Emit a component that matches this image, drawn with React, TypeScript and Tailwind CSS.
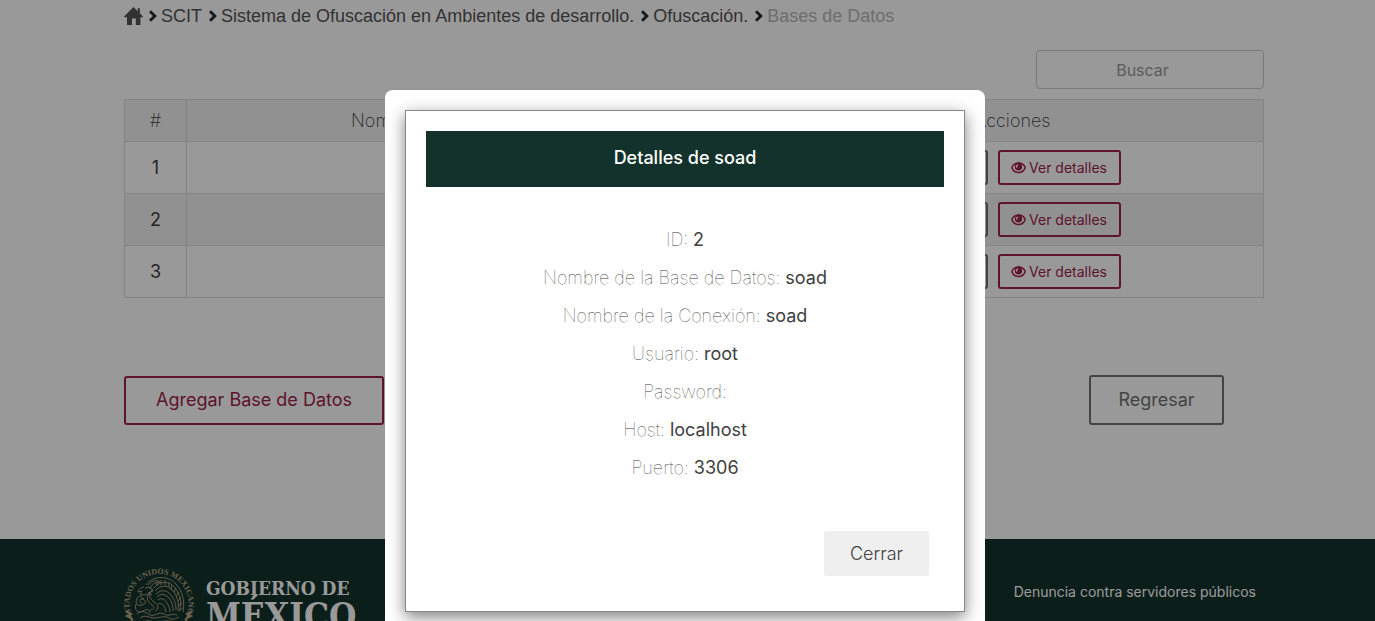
import React from "react";

const details = [
  { label: "ID:", value: "2" },
  { label: "Nombre de la Base de Datos:", value: "soad" },
  { label: "Nombre de la Conexión:", value: "soad" },
  { label: "Usuario:", value: "root" },
  { label: "Password:", value: "" },
  { label: "Host:", value: "localhost" },
  { label: "Puerto:", value: "3306" },
];

function HomeIcon() {
  return (
    <svg viewBox="0 0 19 18" className="h-[18px] w-[19px] shrink-0" fill="currentColor" aria-hidden="true">
      <path d="M9.5 0 13.8 4.2V1.2h2.1v5.1L19 9.5v.8h-2.6V18h-4.6v-6.6H8V18H3V10.3H0v-.8Z" />
    </svg>
  );
}

function ChevronIcon() {
  return (
    <svg viewBox="0 0 8 12" className="h-3 w-2 shrink-0 text-[#2a2a33]" fill="currentColor" aria-hidden="true">
      <path d="M2 .3 7.9 6 2 11.7 0 9.8 3.8 6 0 2.2Z" />
    </svg>
  );
}

function EyeIcon() {
  return (
    <svg viewBox="0 0 15 12" className="h-3 w-[15px] shrink-0" aria-hidden="true">
      <path
        d="M7.5 1C4.400 1 1.800 3 .8 5.600 1.800 8.700 4.400 10.600 7.500 10.600S13.200 8.700 14.200 5.600C13.200 3 10.600 1 7.500 1Z"
        fill="none"
        stroke="currentColor"
        strokeWidth="1.500"
      />
      <path
        d="M7.500.5C5 .5 3.800 2.600 3.800 4.800a3.700 3.700 0 0 0 7.400 0C11.200 2.600 10 .5 7.500.5ZM6.600 2.600c.7 0 .8.700.4 1-.6.4-.8.9-.8 1.600 0 .8-1.100.8-1.200 0-.1-1.400.500-2.500 1.600-2.600Z"
        fill="currentColor"
        fillRule="evenodd"
      />
    </svg>
  );
}

function SealIcon() {
  return (
    <svg viewBox="0 0 70 70" className="size-[70px] shrink-0 text-[#b5a582]" fill="none" stroke="currentColor" aria-hidden="true">
      <defs>
        <path id="seal-arc" d="M6.500 43A29.500 29.500 0 1 1 63.500 43" />
      </defs>
      <text fill="currentColor" stroke="none" className="font-['Liberation_Serif',serif] text-[8px] font-bold">
        <textPath href="#seal-arc" startOffset="50%" textAnchor="middle">
          ESTADOS UNIDOS MEXICANOS
        </textPath>
      </text>
      <g strokeWidth="0.900">
        <path d="M22 17C28 8 43 7 51 15c8 8 10 18 8 29" />
        <path d="M20 19c-3 0-6 3-6 5l4-1c-3 4-1 7 2 8" />
        <path d="M24 17c5-5 9-5 12-3-5 0-9 3-10 7M21 20l5-1 3 4-5 2M17 26c4 3 7-2 11 1" />
        <path d="M30 20c6-8 16-7 21 0 5 6 7 14 5 23M31 23c6-7 14-6 18 0 5 6 6 13 5 19M32 26c5-5 11-4 15 1 4 5 5 10 5 15M33 29c4-4 8-3 12 1 4 5 4 9 4 13M34 32c4-3 7 0 9 3s3 6 3 9M34 36c4-2 7 2 8 8" />
        <path d="M33 14v4m4-6v5m4-5v5m4-3v5m3-2-1 5m5-2-2 4m5 0-3 4m5 1-3 4m4 2-4 3m4 2-4 3" />
        <path d="M29 21c-5 5-4 9 1 13 5 3 5 7 1 9M26 24c-5 6-2 10 2 13 3 2 2 5-2 5" />
        <path d="M15 28c-5 5-3 11 3 9s3-6 0-6-3 4 0 4M12 36c-2 6 2 10 7 7s6-1 7 2" />
        <path d="M13 46c5-5 9-1 13 1s9-4 14-1 8-1 13 1M16 50c5-4 9 0 14 0s10-3 15 0 6 0 10-1M19 54c6-3 11 1 16 0s10-2 15 0" />
      </g>
      <path d="M5 44c2 9 8 17 15 20M65 44c-2 9-8 17-15 20M2 43l5 3-4 2 6 3M68 43l-5 3 4 2-6 3" strokeWidth="2" />
    </svg>
  );
}

function DatabaseTable() {
  return (
    <table className="mt-2.5 w-full table-fixed border-collapse border border-[#ddd] text-center text-lg text-[#404041]">
      <colgroup>
        <col className="w-[62px]" />
        <col className="w-[396px]" />
        <col />
        <col className="w-[502px]" />
      </colgroup>
      <thead>
        <tr className="h-[42px] bg-[#f2f2f2]">
          {["#", "Nombre", "Conexión", "Acciones"].map((title) => (
            <th key={title} scope="col" className="border border-[#ddd] font-extralight">
              {title}
            </th>
          ))}
        </tr>
      </thead>
      <tbody>
        {["1", "2", "3"].map((id) => (
          <tr key={id} className="h-[52px] even:bg-[#f2f2f2]">
            <td className="border border-[#ddd]">{id}</td>
            <td className="border border-[#ddd]" />
            <td className="border border-[#ddd]" />
            <td className="border border-[#ddd]">
              <div className="flex justify-center gap-2.5 text-sm">
                <button type="button" className="h-[35px] w-[83px] rounded-[3px] border-2 border-[#6f7271] text-[#6f7271]">
                  Editar
                </button>
                <button
                  type="button"
                  className="flex h-[35px] w-[123px] items-center justify-center gap-[3px] rounded-[3px] border-2 border-[#9d2449] text-[#9d2449]"
                >
                  <EyeIcon />
                  Ver detalles
                </button>
              </div>
            </td>
          </tr>
        ))}
      </tbody>
    </table>
  );
}

function DetailsDialog() {
  return (
    <div className="fixed inset-0 overflow-hidden bg-black/40 pr-[5px] pt-[90px]">
      <div role="dialog" aria-modal="true" aria-labelledby="dialog-title" className="mx-auto w-full max-w-[600px] rounded-lg bg-white p-5">
        <div className="border border-[#888] bg-white p-5 shadow-[0_5px_15px_rgba(0,0,0,0.5)]">
          <h2 id="dialog-title" className="bg-[#13322b] pb-[15px] pt-[13px] text-center text-lg font-medium text-white">
            Detalles de soad
          </h2>
          <dl className="pt-[34px] text-center text-lg text-[#404041]">
            {details.map(({ label, value }) => (
              <div key={label} className="flex h-[38px] items-center justify-center gap-[5px]">
                <dt className="font-thin">{label}</dt>
                {value && <dd>{value}</dd>}
              </div>
            ))}
          </dl>
          <div className="flex justify-end pb-[15px] pr-[15px] pt-11">
            <button type="button" className="h-[45px] w-[105px] rounded-[3px] bg-[#efefef] text-lg font-light text-[#404041]">
              Cerrar
            </button>
          </div>
        </div>
      </div>
    </div>
  );
}

export default function App() {
  return (
    <div className="flex h-screen flex-col overflow-hidden bg-white font-[Inter,sans-serif] font-normal">
      <main className="h-[539px] shrink-0 pl-[13px]">
        <div className="mx-auto max-w-[1140px] pt-[3px]">
          <nav aria-label="Ruta" className="flex h-[26px] items-center font-['Liberation_Sans',sans-serif] text-lg leading-[26px] text-[#545454]">
            <a href="#inicio" aria-label="Inicio" className="mr-1.5">
              <HomeIcon />
            </a>
            <ChevronIcon />
            <a href="#scit" className="ml-1 mr-[7px]">SCIT</a>
            <ChevronIcon />
            <a href="#sistema" className="ml-1 mr-[7px]">Sistema de Ofuscación en Ambientes de desarrollo.</a>
            <ChevronIcon />
            <a href="#ofuscacion" className="ml-1 mr-[7px]">Ofuscación.</a>
            <ChevronIcon />
            <span className="ml-1 text-[#b8b8b8]">Bases de Datos</span>
          </nav>
          <div className="mt-[21px] flex justify-end">
            <input
              type="search"
              aria-label="Buscar"
              placeholder="Buscar"
              className="h-[39px] w-[228px] rounded border border-[#ccc] text-center text-base placeholder:text-[#999]"
            />
          </div>
          <DatabaseTable />
          <div className="flex items-center justify-between pr-10 pt-[77px] text-lg">
            <button type="button" className="h-[49px] w-[260px] rounded-[3px] border-2 border-[#9d2449] text-[#9d2449]">
              Agregar Base de Datos
            </button>
            <button type="button" className="h-[50px] w-[135px] rounded-[3px] border-2 border-[#6f7271] text-[#6f7271]">
              Regresar
            </button>
          </div>
        </div>
      </main>
      <footer className="h-[200px] shrink-0 bg-[#13322b] pl-[13px]">
        <div className="mx-auto flex max-w-[1140px] items-start justify-between pt-[29px]">
          <div className="flex gap-3">
            <SealIcon />
            <div className="pt-2.5 font-['DejaVu_Serif_Condensed','DejaVu_Serif',serif] font-bold text-white">
              <div className="text-[19px] leading-5">GOBIERNO DE</div>
              <div className="text-[35px] leading-9">MÉXICO</div>
            </div>
          </div>
          <a href="#denuncia" className="mr-2 pt-3.5 text-sm text-white">
            Denuncia contra servidores públicos
          </a>
        </div>
      </footer>
      <DetailsDialog />
    </div>
  );
}
